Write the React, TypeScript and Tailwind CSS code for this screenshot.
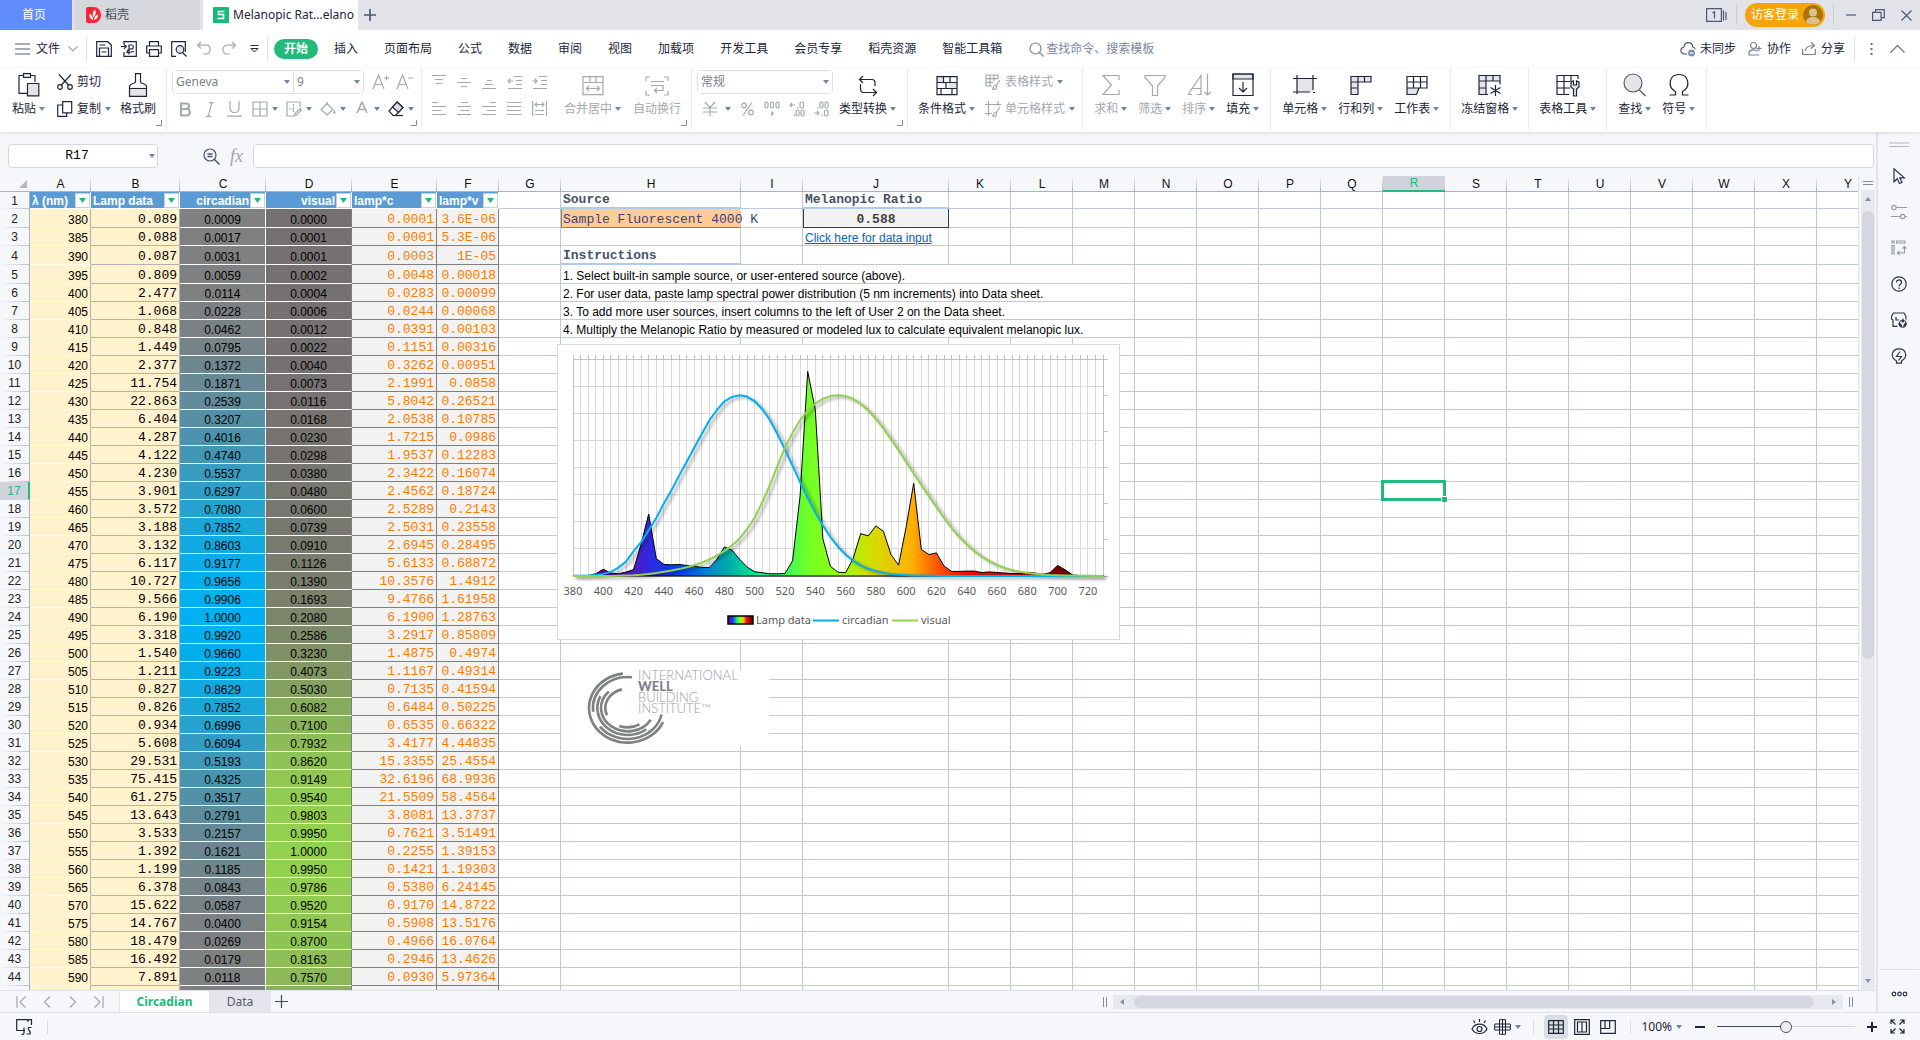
import type { ReactNode } from "react";

type Box = { w?: number; h?: number; className?: string; children: ReactNode };

function Ic({ w = 16, h = 16, className = "", children }: Box) {
  return (
    <svg
      width={w}
      height={h}
      viewBox={`0 0 ${w} ${h}`}
      fill="none"
      stroke="currentColor"
      strokeWidth={1.2}
      className={`shrink-0 ${className}`}
      aria-hidden="true"
    >
      {children}
    </svg>
  );
}

function Caret() {
  return (
    <svg width={6} height={4} viewBox="0 0 6 4" className="shrink-0 fill-[#7384a3]" aria-hidden="true">
      <path d="M0 0h6L3 4z" />
    </svg>
  );
}

function Launcher() {
  return (
    <svg width={6} height={6} viewBox="0 0 6 6" fill="none" stroke="#7f8ba6" className="absolute right-1 bottom-1" aria-hidden="true">
      <path d="M5.5 0v5.5H0" />
    </svg>
  );
}

function Big({ icon, label, caret = true, off = false }: { icon: ReactNode; label: string; caret?: boolean; off?: boolean }) {
  return (
    <button className={`mt-[5px] flex h-[45px] flex-col items-center justify-between whitespace-nowrap ${off ? "text-[#a6a8ac]" : "text-[#1d2536]"}`}>
      {icon}
      <span className="flex items-center gap-[3px] leading-[18px]">
        {label}
        {caret && <Caret />}
      </span>
    </button>
  );
}

function Group({ children, className = "px-[10px]", launcher = false }: { children: ReactNode; className?: string; launcher?: boolean }) {
  return (
    <div className={`relative flex h-[62px] shrink-0 items-start border-r border-[#ececef] ${className}`}>
      {children}
      {launcher && <Launcher />}
    </div>
  );
}

function Tool({ label, children, className = "w-[25px] justify-center" }: { label: string; children: ReactNode; className?: string }) {
  return (
    <button aria-label={label} className={`flex h-5 items-center text-[#a6a8ac] ${className}`}>
      {children}
    </button>
  );
}

/* ---------- title bar ---------- */

function TitleBar() {
  return (
    <header className="flex h-[30px] shrink-0 items-stretch bg-[#e1e3e8]">
      <button className="w-[72px] bg-[#608dfb] pr-1 text-white">首页</button>
      <button className="ml-[3px] flex w-[125px] items-center gap-1 bg-[#d6d8dd] pl-[11px] text-[#44484f]">
        <svg width={15} height={16} viewBox="0 0 15 16" aria-hidden="true">
          <path d="M2 0h6a7 8 0 0 1 0 16H2a2 2 0 0 1-2-2V2a2 2 0 0 1 2-2z" fill="#fb2438" />
          <path d="M7 13C4 12 3 9 3.500 6.500 6 8 7 10 7 13zm.5-2.500C6 7 7 4 9 2.500c1.500 3 .5 6-1.500 8zm.3 2.500C8.500 10 10 8 12 7.500c.3 3-1.500 5-4.200 5.500z" fill="#fff" />
        </svg>
        稻壳
      </button>
      <button className="ml-[3px] flex w-[155px] items-center gap-1 overflow-hidden bg-white pl-[10px] whitespace-nowrap text-[#1d2536]">
        <svg width={16} height={16} viewBox="0 0 16 16" className="shrink-0" aria-hidden="true">
          <rect width={16} height={16} rx={1} fill="#15bb78" />
          <path d="M11.500 4.500h-6v3h5v4h-6" fill="none" stroke="#fff" strokeWidth={1.600} />
        </svg>
        <span className="overflow-hidden">Melanopic Rat...elano</span>
      </button>
      <button aria-label="新建标签" className="flex w-6 items-center justify-center text-[#4a5878]">
        <Ic w={12} h={12}><path d="M6 0v12M0 6h12" strokeWidth={1.700} /></Ic>
      </button>
      <div className="ml-auto flex items-center text-[#4a5878]">
        <button aria-label="窗口列表" className="mr-[9px]">
          <Ic w={21} h={14}>
            <path d="M.6.6h14.800v12.800H.6zM17.500 2.500v10M20 4v8" />
            <path d="M6.500 5l2-1.200V10.500" />
          </Ic>
        </button>
        <span className="h-5 w-px bg-[#c9ccd3]" />
        <button className="ml-2 flex h-6 w-20 items-center gap-1 rounded-full bg-[#f5a50b] pl-[6px] whitespace-nowrap text-white">
          访客登录
          <svg width={20} height={20} viewBox="0 0 20 20" className="shrink-0" aria-hidden="true">
            <circle cx={10} cy={10} r={10} fill="#a8740a" />
            <circle cx={10} cy={7.500} r={4} fill="#dcc18c" />
            <path d="M3 17a7 5 0 0 1 14 0 10 10 0 0 1-14 0z" fill="#dcc18c" />
          </svg>
        </button>
        <span className="ml-2 h-5 w-px bg-[#c9ccd3]" />
        <button aria-label="最小化" className="ml-3"><Ic w={10}><path d="M0 8h10" /></Ic></button>
        <button aria-label="还原" className="ml-4">
          <Ic w={13} h={12}><path d="M3.500 3V.6h8.800v8h-3M.6 3.300h8.500v8H.6z" /></Ic>
        </button>
        <button aria-label="关闭" className="mr-2 ml-4"><Ic w={11} h={11}><path d="M.5.5l10 10M10.500.5l-10 10" /></Ic></button>
      </div>
    </header>
  );
}

/* ---------- menu row ---------- */

const menuTabs = ["插入", "页面布局", "公式", "数据", "审阅", "视图", "加载项", "开发工具", "会员专享", "稻壳资源", "智能工具箱"];

function MenuRow() {
  return (
    <nav className="flex h-[38px] shrink-0 items-center bg-white text-[#1d2536]">
      <button className="ml-[15px] flex items-center gap-[6px]">
        <Ic w={15} h={12}><path d="M0 1h15M0 6h15M0 11h15" stroke="#555c6b" /></Ic>
        文件
        <Ic w={10} h={6} className="ml-[2px] text-[#a5a8b0]"><path d="M.5.5L5 5 9.500.5" /></Ic>
      </button>
      <span className="ml-2 h-6 w-px bg-[#dedfe3]" />
      <div className="ml-[9px] flex items-center gap-[9px]">
        <button aria-label="保存"><Ic><path d="M.7.7h11L15.300 4v11.300H.7zM3.500 15V7h9v8M3.500 4h6M5.500 11h5" /></Ic></button>
        <button aria-label="输出为PDF"><Ic><path d="M3 3V.7h12.300v14.600H3V11M0 5.500h5M3 3.300l2.300 2.200L3 7.800M8 13.500V4h2.500c2.500 0 2.500 3.800 0 3.800C8 8 6 9.500 6 11.500c2 .5 5-1 7-1" /></Ic></button>
        <button aria-label="打印"><Ic><path d="M3.500 5V.7h9V5M3.500 12H.7V5h14.600v7h-2.800M3.500 8.700h9v6.600h-9z" /></Ic></button>
        <button aria-label="打印预览"><Ic><path d="M5 15.300H.7V.7h13.600V11" /><circle cx={9} cy={8.500} r={3.800} fill="#e4e5e8" /><path d="M11.500 11.500l4 4" /></Ic></button>
        <button aria-label="撤销" className="text-[#a9abb0]"><Ic><path d="M5 1L1.500 4.200 5 7.500M1.500 4.200H10c5.500 0 5.500 8.800 0 8.800H7" /></Ic></button>
        <button aria-label="恢复" className="text-[#a9abb0]"><Ic><path d="M11 1l3.500 3.200L11 7.500M14.500 4.200H6c-5.500 0-5.500 8.800 0 8.800h3" /></Ic></button>
        <button aria-label="自定义快速访问" className="ml-1"><Ic w={9} h={8}><path d="M.5.500h8M1 3.500L4.500 7 8 3.500z" strokeWidth={1} /></Ic></button>
      </div>
      <span className="ml-2 h-6 w-px bg-[#dedfe3]" />
      <button className="ml-[6px] h-5 w-11 rounded-full bg-[#21ba7b] font-bold text-white">开始</button>
      <div className="ml-[3px] flex">
        {menuTabs.map((t) => (
          <button key={t} className="px-[13px] whitespace-nowrap">{t}</button>
        ))}
      </div>
      <label className="ml-[14px] flex items-center gap-[2px] text-[#7e879c]">
        <Ic w={15} h={15}><circle cx={6.500} cy={6.500} r={5.500} /><path d="M10.500 10.500l4 4" /></Ic>
        <input className="w-[140px] outline-none placeholder:text-[#7e879c]" placeholder="查找命令、搜索模板" />
      </label>
      <div className="mr-[15px] ml-auto flex items-center whitespace-nowrap">
        <button className="flex items-center gap-1">
          <Ic w={16} className="text-[#555c6b]">
            <path d="M7 13H4.500C-.5 12.500 0 6.500 4 6c.5-6 8.500-5.500 8.700 0 1.200.3 2.300 1.300 2.500 2.500" />
            <circle cx={11.500} cy={12} r={3.500} fill="#7c8fb3" stroke="none" /><path d="M9.700 12h3.600" stroke="#fff" />
          </Ic>
          未同步
        </button>
        <button className="ml-3 flex items-center gap-[5px]">
          <Ic w={14} className="text-[#7a808c]"><circle cx={5.500} cy={4.500} r={3} /><path d="M10 10.500c-2-2.500-8.500-2-9 1v2.500h10M8.500 7.500h5M11 5v5" /></Ic>
          协作
        </button>
        <button className="ml-[11px] flex items-center gap-[5px]">
          <Ic w={14} className="text-[#7a808c]"><path d="M.7 8v5.500h12.600V8M3.500 10c0-4 2.500-5.500 8-5.500M9 1.500l3.500 3-3.500 3" /></Ic>
          分享
        </button>
        <span className="ml-[9px] h-6 w-px bg-[#dedfe3]" />
        <button aria-label="更多" className="ml-[15px] text-[#666d7b]"><Ic w={3} h={12}><path d="M1.500 0v2M1.500 5v2M1.500 10v2" strokeWidth={2} /></Ic></button>
        <button aria-label="折叠功能区" className="ml-[17px] text-[#666d7b]"><Ic w={15} h={8}><path d="M.5 7.500l7-7 7 7" /></Ic></button>
      </div>
    </nav>
  );
}

/* ---------- ribbon ---------- */

const alignTop = ["M0 1.500h14M3 5.500h8M4 9.500h6", "M4 4.500h6M0 8.500h14M4 12.500h6", "M5 6.500h5M3 10.500h8M0 14.500h14", "M7 2.500h8M9 6.500h6M9 10.500h6M1 14.500h14M1 7h5M3.500 4.500L1 7l2.500 2.500", "M7 2.500h8M9 6.500h6M9 10.500h6M1 14.500h14M0 7h5M2.500 4.500L5 7 2.500 9.500"];
const alignBottom = ["M0 1.500h6M0 5.500h14M0 9.500h9M0 13.500h14", "M4 1.500h7M0 5.500h14M3 9.500h9M0 13.500h14", "M8 1.500h6M0 5.500h14M5 9.500h9M0 13.500h14", "M0 1.500h14M0 5.500h14M0 9.500h14M0 13.500h14", "M.7 0v15M14.500 0v15M3 3.500h9M5 1.500l-2 2 2 2M10 1.500l2 2-2 2M3 9.500h9M3 13.500h9"];
const topNames = ["顶端对齐", "垂直居中", "底端对齐", "减少缩进量", "增加缩进量"];
const bottomNames = ["左对齐", "水平居中", "右对齐", "两端对齐", "分散对齐"];

function SmallRow({ icon, label, off = false, caret = true, className = "h-6" }: { icon: ReactNode; label: string; off?: boolean; caret?: boolean; className?: string }) {
  return (
    <button className={`flex items-center gap-1 whitespace-nowrap ${className} ${off ? "text-[#a6a8ac]" : "text-[#1d2536]"}`}>
      {icon}
      {label}
      {caret && <Caret />}
    </button>
  );
}

function SelectBox({ label, value, className }: { label: string; value: string; className: string }) {
  return (
    <label className={`flex h-full items-center bg-white pr-[3px] text-[#7d8086] ${className}`}>
      <select aria-label={label} defaultValue={value} className="w-full appearance-none bg-transparent pl-[3px] outline-none">
        <option>{value}</option>
      </select>
      <Caret />
    </label>
  );
}

function Ribbon() {
  return (
    <div className="z-10 flex h-16 shrink-0 overflow-hidden bg-white text-[#1d2536] shadow-[0_1px_3px_rgba(60,70,90,0.18)]">
      <Group className="pr-[10px] pl-3" launcher>
        <Big label="粘贴" icon={<Ic w={22} h={24}><path d="M9 20.400H1V2.500h4M13 2.500h4V9M5.500.7h7v3.600h-7z" /><path d="M9.500 10.500h11.300v12.300H9.500z" fill="#e4e5e8" /></Ic>} />
        <div className="mt-[2px] ml-3 flex flex-col gap-[5px]">
          <SmallRow caret={false} label="剪切" icon={<Ic><path d="M2 .5l10 11M14 .5l-10 11" /><circle cx={3} cy={13} r={2.300} /><circle cx={13} cy={13} r={2.300} /></Ic>} />
          <SmallRow className="h-5" label="复制" icon={<Ic><path d="M5.500 4H.7v11.300h9V12M5.700.7h9v11.200h-9z" /></Ic>} />
        </div>
        <div className="ml-[9px]">
          <Big caret={false} label="格式刷" icon={<Ic w={20} h={24}><path d="M1 14.500h18v9H1z" fill="#e4e5e8" stroke="none" /><path d="M7.500 9V.7h5V9c0 2 6 1 6 4.500v9.800h-17v-9.800C1.500 10 7.500 11 7.500 9zM1.500 15.500h17" /></Ic>} />
        </div>
      </Group>
      <Group className="pr-1 pl-[5px]" launcher>
        <div className="mt-[2px] flex flex-col gap-[5px]">
          <div className="flex items-center">
            <div className="flex h-6 w-[192px] rounded-sm border border-[#dcdee2]">
              <SelectBox label="字体" value="Geneva" className="w-[121px] border-r border-[#dcdee2]" />
              <SelectBox label="字号" value="9" className="flex-1" />
            </div>
            <Tool label="增大字号" className="ml-[5px] w-6 justify-center"><Ic w={18} h={16}><path d="M1 15L6.500 1 12 15M3 10.500h7M12 4h5M14.500 1.500v5" /></Ic></Tool>
            <Tool label="减小字号" className="w-6 justify-center"><Ic w={18} h={16}><path d="M1 15L6.500 1 12 15M3 10.500h7M12 4h5" /></Ic></Tool>
          </div>
          <div className="flex">
            <Tool label="加粗"><Ic w={12} h={15}><path d="M2 1.500h5c4 0 4 5.500 0 5.500H2zM2 7h5.500c4.500 0 4.500 6.500 0 6.500H2z" strokeWidth={2} /></Ic></Tool>
            <Tool label="倾斜"><Ic w={10} h={15}><path d="M4 .7h5M1 14.300h5M6.700.7l-3.400 13.600" /></Ic></Tool>
            <Tool label="下划线"><Ic w={15} h={16}><path d="M3 0v7c0 6 9 6 9 0V0M0 15.200h15" /></Ic></Tool>
            <Tool label="边框" className="w-[34px] gap-1 pl-[5px]"><Ic w={16}><path d="M1 1h14v14H1zM8 1v14M1 8h14" /></Ic><Caret /></Tool>
            <Tool label="绘制边框" className="w-[34px] gap-1 pl-[5px]"><Ic w={16}><path d="M7 15H1V1h13v5" /><path d="M7.500 3v8M3 8h6" strokeDasharray="2 1" /><path d="M14 7.500l1.500 1.500-5 5-2.500 1 1-2.500z" /></Ic><Caret /></Tool>
            <Tool label="填充颜色" className="w-[34px] gap-1 pl-[5px]"><Ic w={16}><path d="M7 1v3M7 2.500l6 6L7 14 1 8.500z" /><path d="M14.500 10c2 3-2 3 0 0z" fill="currentColor" /></Ic><Caret /></Tool>
            <Tool label="字体颜色" className="w-[34px] gap-1 pl-[5px]"><Ic w={16}><path d="M3 12L8 1l5 11M5 8.500h6" strokeWidth={1.600} /></Ic><Caret /></Tool>
            <Tool label="清除" className="w-[34px] gap-1 pl-[5px]"><Ic w={16} className="text-[#1d2536]"><path d="M9 1l6 5.500-7.500 8H5L1 10z" /><path d="M9 1l6 5.500-4.500 5L4.500 6z" fill="#d9dbdf" /><path d="M5 14.500h10" /></Ic><Caret /></Tool>
          </div>
        </div>
      </Group>
      <Group className="pr-[10px] pl-[5px]" launcher>
        <div className="mt-[2px] flex flex-col gap-[5px]">
          <div className="flex h-6 items-center">
            {alignTop.map((d, i) => <Tool key={d} label={topNames[i]}><Ic w={15}><path d={d} /></Ic></Tool>)}
          </div>
          <div className="flex">
            {alignBottom.map((d, i) => <Tool key={d} label={bottomNames[i]}><Ic w={15}><path d={d} /></Ic></Tool>)}
          </div>
        </div>
        <div className="ml-3 flex gap-3">
          <Big off label="合并居中" icon={<Ic w={22} h={24}><path d="M1 3.600h20v18H1zM1 9.500h20M8 3.600v6M14 3.600v6M4.500 15.500h13M7 13l-2.500 2.500L7 18M15 13l2.500 2.500L15 18" /></Ic>} />
          <Big off caret={false} label="自动换行" icon={<Ic w={24} h={24}><path d="M1 8V4h4M19 4h4v4M1 18v4h4M23 18v4h-4M6 8.500h13M6 12.500h12v5h-8M12 15l-2.500 2.500L12 20" /></Ic>} />
        </div>
      </Group>
      <Group className="pr-[11px] pl-[5px]" launcher>
        <div className="mt-[2px] mr-[6px] flex w-[136px] flex-col gap-[5px]">
          <div className="h-6 rounded-sm border border-[#dcdee2]"><SelectBox label="数字格式" value="常规" className="w-full" /></div>
          <div className="flex pl-[6px]">
            <Tool label="货币" className="w-8 gap-2"><Ic w={14}><path d="M2 1l5 5.500L12 1M7 6.500V15M0 7h14M0 11h14" /></Ic><Caret /></Tool>
            <Tool label="百分比" className="w-6 justify-center"><Ic w={13}><path d="M11 1.500L2 14.500" /><circle cx={3} cy={4.500} r={2.300} /><circle cx={10} cy={11.500} r={2.300} /></Ic></Tool>
            <Tool label="千位分隔"><Ic w={16}><rect x={1} y={1} width={3} height={6} rx={1.500} /><rect x={6.500} y={1} width={3} height={6} rx={1.500} /><rect x={12} y={1} width={3} height={6} rx={1.500} /><path d="M8.500 10.500v2l-1 2" strokeWidth={2} /></Ic></Tool>
            <Tool label="增加小数位"><Ic w={16}><path d="M1 4h5M3 2L1 4l2 2M8.500 6v1.500M5.500 13.500V15" /><rect x={11} y={1} width={3.500} height={6} rx={1.500} /><rect x={7} y={9} width={3} height={6} rx={1.500} /><rect x={12} y={9} width={3} height={6} rx={1.500} /></Ic></Tool>
            <Tool label="减少小数位" className="w-6 justify-center"><Ic w={16}><path d="M1 12h5M4 10l2 2-2 2M5 6v1.500M9 13.500V15" /><rect x={7} y={1} width={3} height={6} rx={1.500} /><rect x={12} y={1} width={3} height={6} rx={1.500} /><rect x={11.500} y={9} width={3.500} height={6} rx={1.500} /></Ic></Tool>
          </div>
        </div>
        <Big label="类型转换" icon={<Ic w={20} h={24}><path d="M5 3L1.500 6.500 5 10M1.500 6.500H14c2 0 3 1 3 3V13M2.500 11v5c0 2 1 3.500 3 3.500h12.500M15 16l3.500 3.500L15 23" /></Ic>} />
      </Group>
      <Group className="pr-[7px] pl-[10px]">
        <Big label="条件格式" icon={<Ic w={22} h={24}><path d="M1 4h6v5H1zM13 9h8v6h-8z" fill="#e4e5e8" stroke="none" /><path d="M1 3.600h20v18H1zM1 9.500h20M1 15.500h20M7.500 3.600v6M14 3.600v6M5 15.500v6M10 9.500v6M16 15.500v6" /></Ic>} />
        <div className="mt-[2px] ml-[10px] flex flex-col gap-[5px]">
          <SmallRow off label="表格样式" icon={<Ic><path d="M7 12H1V1h12v4M1 4.700h12M1 8.300h7M5 1v11M9 1v6M15 6l-4 6M11 11c-3 0-2 4-4 4 3 1 5 0 4.500-3" /></Ic>} />
          <SmallRow off className="h-5" label="单元格样式" icon={<Ic><path d="M3.500 0v15M0 3.500h16M13 0v5M0 12.500h7M15 6l-4 6M11 11c-3 0-2 4-4 4 3 1 5 0 4.500-3" /></Ic>} />
        </div>
      </Group>
      <Group className="gap-[11px] px-[11px]">
        <Big off label="求和" icon={<Ic w={20} h={24}><path d="M18 7V2.500H2L10.500 12 2 21.500h16V17" /></Ic>} />
        <Big off label="筛选" icon={<Ic w={22} h={24}><path d="M1 2.500h20v2L13.500 13v9.500h-5V13L1 4.500z" /></Ic>} />
        <Big off label="排序" icon={<Ic w={24} h={24}><path d="M1 21.500L14 2.500v19H10M14 2.500v19M5 15.500h9M20.500 1v21M17.500 19l3 3 3-3M1 21.500h4" /></Ic>} />
        <Big label="填充" icon={<Ic w={22} h={24}><path d="M1 1h20v5H1z" fill="#e4e5e8" /><path d="M1 1h20v21.500H1zM11 9v10M7 15l4 4 4-4" /></Ic>} />
      </Group>
      <Group className="gap-[11px] px-[11px]">
        <Big label="单元格" icon={<Ic w={24} h={24}><path d="M4 6h16v13H4z" fill="#e4e5e8" stroke="none" /><path d="M4 2v19M20 2v15M0 5.500h24M0 19h17M20 19.500h2" /></Ic>} />
        <Big label="行和列" icon={<Ic w={22} h={24}><path d="M1 3.500h20V9H8v12.500H1z" fill="#e4e5e8" stroke="none" /><path d="M1 3.500h20V9H1zM1 9v12.500h7V3.500M14.500 3.500V9M1 15h7" /></Ic>} />
        <Big label="工作表" icon={<Ic w={22} h={24}><path d="M1 15h12l-2 6.500H1z" fill="#e4e5e8" stroke="none" /><path d="M1 3.500h20V15H1zM1 9h20M7.500 3.500V15M14.500 3.500V15M1 15v6.500h9.500L13 15" /></Ic>} />
      </Group>
      <Group>
        <Big label="冻结窗格" icon={<Ic w={24} h={24}><path d="M1 2.500h21V8H8v13.500H1z" fill="#e4e5e8" stroke="none" /><path d="M10 21.500H1v-19h21v9M1 8h21M8 2.500v19M15 2.500V8M1 15h7M17.500 12v11M12.500 14.500l10 6M22.500 14.500l-10 6" /></Ic>} />
      </Group>
      <Group>
        <Big label="表格工具" icon={<Ic w={24} h={24}><path d="M13 21.500H1v-19h21V6M1 8.500h13M1 15h13M8 2.500v19M15 2.500v6" /><path d="M15 9v5l2.500 2v7h3v-7l2.500-2V9l-2.500-1v4h-3V8z" fill="#e4e5e8" /></Ic>} />
      </Group>
      <Group className="gap-[11px] px-[11px]">
        <Big label="查找" icon={<Ic w={24} h={24}><circle cx={10} cy={10} r={9} fill="#e4e5e8" stroke="#555c6b" /><path d="M16.500 17l6 6" stroke="#555c6b" /></Ic>} />
        <Big label="符号" icon={<Ic w={22} h={24}><path d="M1.500 22h6v-3.500C-1 14 1 1.500 11 1.500S23 14 14.500 18.500V22h6" /></Ic>} />
      </Group>
    </div>
  );
}

/* ---------- sheet data ---------- */

const lamp = [0.089, 0.088, 0.087, 0.809, 2.477, 1.068, 0.848, 1.449, 2.377, 11.754, 22.863, 6.404, 4.287, 4.122, 4.23, 3.901, 3.572, 3.188, 3.132, 6.117, 10.727, 9.566, 6.19, 3.318, 1.54, 1.211, 0.827, 0.826, 0.934, 5.608, 29.531, 75.415, 61.275, 13.643, 3.533, 1.392, 1.199, 6.378, 15.622, 14.767, 18.479, 16.492, 7.891, 4, 18, 34.2, 9.8, 7.9, 8.5, 3.7, 1.7, 1.7, 1.8, 1.8, 1.3, 1.5, 1.3, 1.1, 0.9, 1, 1.3, 1.1, 0.6, 1.2, 3.9, 2.3, 0.4, 0.1, 0.1, 0.1, 0.1];
const circadian = [0.0009, 0.0017, 0.0031, 0.0059, 0.0114, 0.0228, 0.0462, 0.0795, 0.1372, 0.1871, 0.2539, 0.3207, 0.4016, 0.474, 0.5537, 0.6297, 0.708, 0.7852, 0.8603, 0.9177, 0.9656, 0.9906, 1, 0.992, 0.966, 0.9223, 0.8629, 0.7852, 0.6996, 0.6094, 0.5193, 0.4325, 0.3517, 0.2791, 0.2157, 0.1621, 0.1185, 0.0843, 0.0587, 0.04, 0.0269, 0.0179, 0.0118, 0.0077, 0.005, 0.0033, 0.0022, 0.0015, 0.001, 0.0006, 0.0004, 0.0003, 0.0002, 0.0001, 0.0001, 0, 0, 0, 0, 0, 0, 0, 0, 0, 0, 0, 0, 0, 0, 0, 0];
const visual = [0, 0.0001, 0.0001, 0.0002, 0.0004, 0.0006, 0.0012, 0.0022, 0.004, 0.0073, 0.0116, 0.0168, 0.023, 0.0298, 0.038, 0.048, 0.06, 0.0739, 0.091, 0.1126, 0.139, 0.1693, 0.208, 0.2586, 0.323, 0.4073, 0.503, 0.6082, 0.71, 0.7932, 0.862, 0.9149, 0.954, 0.9803, 0.995, 1, 0.995, 0.9786, 0.952, 0.9154, 0.87, 0.8163, 0.757, 0.6949, 0.631, 0.5668, 0.503, 0.4412, 0.381, 0.321, 0.265, 0.217, 0.175, 0.1382, 0.107, 0.0816, 0.061, 0.0446, 0.032, 0.0232, 0.017, 0.0119, 0.0082, 0.0057, 0.0041, 0.0029, 0.0021, 0.0015, 0.001, 0.0007, 0.0005];
const lampC = "0.0001 0.0001 0.0003 0.0048 0.0283 0.0244 0.0391 0.1151 0.3262 2.1991 5.8042 2.0538 1.7215 1.9537 2.3422 2.4562 2.5289 2.5031 2.6945 5.6133 10.3576 9.4766 6.1900 3.2917 1.4875 1.1167 0.7135 0.6484 0.6535 3.4177 15.3355 32.6196 21.5509 3.8081 0.7621 0.2255 0.1421 0.5380 0.9170 0.5908 0.4966 0.2946 0.0930".split(" ");
const lampV = "3.6E-06 5.3E-06 1E-05 0.00018 0.00099 0.00068 0.00103 0.00316 0.00951 0.0858 0.26521 0.10785 0.0986 0.12283 0.16074 0.18724 0.2143 0.23558 0.28495 0.68872 1.4912 1.61958 1.28763 0.85809 0.4974 0.49314 0.41594 0.50225 0.66322 4.44835 25.4554 68.9936 58.4564 13.3737 3.51491 1.39153 1.19303 6.24145 14.8722 13.5176 16.0764 13.4626 5.97364".split(" ");

const mix = (a: number[], b: number[], t: number) => `rgb(${a.map((v, i) => Math.round(v + (b[i] - v) * t)).join(",")})`;
const blueScale = (t: number) => mix([128, 128, 128], [0, 176, 240], t);
const greenScale = (t: number) => mix([118, 113, 113], [146, 208, 80], t);

const columns: [string, number][] = [
  ["A", 61], ["B", 89], ["C", 86], ["D", 86], ["E", 85], ["F", 62], ["G", 62], ["H", 180], ["I", 62], ["J", 146],
  ..."KLMNOPQRSTUVWXY".split("").map((c): [string, number] => [c, 62]),
];

const instructions = [
  "1. Select built-in sample source, or user-entered source (above).",
  "2. For user data, paste lamp spectral power distribution (5 nm increments) into Data sheet.",
  "3. To add more user sources, insert columns to the left of User 2 on the Data sheet.",
  "4. Multiply the Melanopic Ratio by measured or modeled lux to calculate equivalent melanopic lux.",
];

const MONO = "font-['Liberation_Mono',monospace] text-[13px]";

function FilterHead({ label, right = false }: { label: string; right?: boolean }) {
  return (
    <td className="border-r border-b border-white bg-[#5b9bd5] font-bold text-white">
      <div className="flex h-[15px] items-center pl-[2px]">
        <span className={`flex-1 overflow-hidden ${right ? "pr-px text-right" : ""}`}>{label}</span>
        <button aria-label={`筛选 ${label}`} className="flex h-[15px] w-[15px] shrink-0 items-center justify-center border border-[#c9cfda] bg-white">
          <svg width={7} height={5} viewBox="0 0 7 5" aria-hidden="true"><path d="M0 0h7L3.500 5z" fill="#1fb87a" /></svg>
        </button>
      </div>
    </td>
  );
}

function DataCells({ row }: { row: number }) {
  const i = row - 2;
  const shown = row <= 44;
  return (
    <>
      <td className="border-r border-b border-r-[#b2b2b2] border-b-[#fffaf0] bg-[#fff2cc] pr-[2px] text-right text-black">{shown && 380 + i * 5}</td>
      <td className={`border-r border-b border-[#b2b2b2] bg-[#fff2cc] pr-[2px] text-right text-black ${MONO}`}>{shown && lamp[i].toFixed(3)}</td>
      <td className="border-r border-b border-white text-center text-black" style={{ backgroundColor: blueScale(circadian[i]) }}>{shown && circadian[i].toFixed(4)}</td>
      <td className="border-r border-b border-r-[#7f7f7f] border-b-white text-center text-black" style={{ backgroundColor: greenScale(visual[i]) }}>{shown && visual[i].toFixed(4)}</td>
      <td className={`border-r border-b border-[#7f7f7f] bg-[#f2f2f2] pr-[2px] text-right text-[#fa7d00] ${MONO}`}>{lampC[i]}</td>
      <td className={`border-r border-b border-[#7f7f7f] bg-[#f2f2f2] pr-[2px] text-right text-[#fa7d00] ${MONO}`}>{lampV[i]}</td>
    </>
  );
}

const PLAIN = "border-r border-b border-[#c3c9dc]";
const TITLE = `border-r border-b-2 border-r-[#c3c9dc] border-b-[#acccea] pl-[2px] leading-3 font-bold text-[#44546a] ${MONO}`;

function otherCell(row: number, col: string) {
  if (row === 1 && col === "H") return <td key={col} className={TITLE}>Source</td>;
  if (row === 1 && col === "J") return <td key={col} className={TITLE}>Melanopic Ratio</td>;
  if (row === 4 && col === "H") return <td key={col} className={TITLE}>Instructions</td>;
  if (row === 2 && col === "H")
    return <td key={col} className={`border-b border-l border-[#7f7f7f] bg-[#ffcc99] pl-px text-[#3f3f76] ${MONO}`}>Sample Fluorescent 4000 K</td>;
  if (row === 2 && col === "J")
    return <td key={col} className={`border-x border-b border-[#3f3f3f] bg-[#f2f2f2] text-center font-bold text-[#3f3f3f] ${MONO}`}>0.588</td>;
  if (row === 3 && col === "J")
    return <td key={col} className={`${PLAIN} pl-[2px]`}><a href="#data" className="text-[#0563c1] underline">Click here for data input</a></td>;
  if (row >= 5 && row <= 8) {
    if (col === "H") return <td key={col} colSpan={6} className={`${PLAIN} pl-[2px] text-black`}>{instructions[row - 5]}</td>;
    if ("IJKLM".includes(col)) return null;
  }
  if (row === 17 && col === "R")
    return (
      <td key={col} className={`${PLAIN} relative`}>
        <span className="absolute -top-[2px] -right-[2px] -bottom-[2px] -left-[2px] border-[3px] border-[#21ba7b]" />
        <span className="absolute -right-[3px] -bottom-[3px] h-[6px] w-[6px] border-t border-l border-white bg-[#21ba7b]" />
      </td>
    );
  return <td key={col} className={PLAIN} />;
}

function Grid() {
  const rows = Array.from({ length: 45 }, (_, i) => i + 1);
  return (
    <table className="w-[1879px] table-fixed border-separate border-spacing-0 bg-white font-['Liberation_Sans',sans-serif] text-xs leading-[14px] whitespace-nowrap [&_td]:align-bottom [&_td]:leading-[14px]">
      <colgroup>
        <col className="w-[30px]" />
        {columns.map(([c, w]) => <col key={c} style={{ width: w }} />)}
      </colgroup>
      <thead>
        <tr className="h-4 bg-[#f5f7fa] text-[#111]">
          <th className="border-b border-[#a5b0ca]">
            <svg width={8} height={8} viewBox="0 0 8 8" className="mr-[3px] ml-auto" aria-hidden="true"><path d="M8 0v8H0z" fill="#b5b8bf" /></svg>
          </th>
          {columns.map(([c]) => (
            <th
              key={c}
              className={
                c === "R"
                  ? "border-b-2 border-[#21ba7b] bg-[#d0d3db] p-0 font-normal text-[#21ba7b]"
                  : "border-b border-[#a5b0ca] bg-[linear-gradient(to_top,#a5b0ca,#f5f7fa)] bg-[length:1px_100%] bg-right bg-no-repeat p-0 font-normal"
              }
            >
              {c}
            </th>
          ))}
        </tr>
      </thead>
      <tbody>
        {rows.map((row) => (
          <tr key={row} className={row === 1 ? "h-[17px]" : row === 2 || row === 4 || row === 5 ? "h-[19px]" : "h-[18px]"}>
            <th
              className={
                row === 17
                  ? "border-r-2 border-b border-r-[#21ba7b] border-b-[#d0d3db] bg-[#d0d3db] p-0 font-normal text-[#21ba7b]"
                  : "border-r border-r-[#a5b0ca] bg-[#f5f7fa] bg-[linear-gradient(to_left,#b5bed3,#f5f7fa)] bg-[length:100%_1px] bg-bottom bg-no-repeat p-0 font-normal text-[#222]"
              }
            >
              {row < 45 && row}
            </th>
            {row === 1 ? (
              <>
                <FilterHead label="λ (nm)" />
                <FilterHead label="Lamp data" />
                <FilterHead label="circadian" right />
                <FilterHead label="visual" right />
                <FilterHead label="lamp*c" />
                <FilterHead label="lamp*v" />
              </>
            ) : (
              <DataCells row={row} />
            )}
            {columns.slice(6).map(([c]) => otherCell(row, c))}
          </tr>
        ))}
      </tbody>
    </table>
  );
}

/* ---------- chart ---------- */

const L = 16;
const R = 546;
const T = 15;
const B = 232;
const px = (i: number) => L + (i * (R - L)) / 70;
const curve = (vals: number[], max: number) => vals.map((v, i) => `${px(i).toFixed(1)},${(B - (v / max) * (B - T)).toFixed(1)}`).join(" ");
const spectrum: [number, string][] = [
  [0, "#2a0040"], [6, "#6a00a0"], [12, "#4c1cc8"], [15, "#2b2be6"], [20, "#0040ff"], [25, "#0080d0"], [29, "#00a8a8"], [35, "#00f090"],
  [40, "#30ff60"], [44, "#70ff28"], [50, "#90ff10"], [56, "#d0e000"], [60, "#e8c800"], [64, "#ffb000"], [69, "#ff5000"], [74, "#f01000"], [85, "#c00000"], [91, "#800000"], [100, "#300000"],
];

function Spectrum({ id }: { id: string }) {
  return (
    <linearGradient id={id} x1={0} x2={1} y1={0} y2={0}>
      {spectrum.map(([o, c]) => <stop key={o} offset={`${o}%`} stopColor={c} />)}
    </linearGradient>
  );
}

function Chart() {
  const v = curve(visual, 1.2);
  const c = curve(circadian, 1.2);
  return (
    <svg width={563} height={296} viewBox="0 0 563 296" className="absolute top-[168px] left-[557px] font-['Noto_Sans',sans-serif] text-[11px]" role="img" aria-label="Lamp spectrum">
      <defs>
        <Spectrum id="spectrum" />
        <Spectrum id="spectrumKey" />
        <filter id="soft" x="-10%" y="-10%" width="120%" height="120%"><feGaussianBlur stdDeviation={1.500} /></filter>
      </defs>
      <rect x={0.500} y={0.500} width={562} height={295} fill="#fff" stroke="#d9d9d9" />
      <g stroke="#d9d9d9" shapeRendering="crispEdges">
        {Array.from({ length: 71 }, (_, i) => <line key={i} x1={px(i)} x2={px(i)} y1={T} y2={B} />)}
        {Array.from({ length: 9 }, (_, i) => <line key={i} x1={L} x2={R} y1={B - (i * (B - T)) / 8} y2={B - (i * (B - T)) / 8} />)}
      </g>
      <g stroke="#bfbfbf" shapeRendering="crispEdges">
        {Array.from({ length: 71 }, (_, i) => <line key={i} x1={px(i)} x2={px(i)} y1={T - 4} y2={T} />)}
        {Array.from({ length: 7 }, (_, i) => <line key={i} x1={R} x2={R + 5} y1={B - (i * (B - T)) / 6} y2={B - (i * (B - T)) / 6} />)}
        <path d={`M${L} ${T}H${R}V${B}H${L}z`} fill="none" />
      </g>
      <polygon points={`${L},${B} ${curve(lamp, 80)} ${R},${B}`} fill="url(#spectrum)" stroke="#000" strokeWidth={1} />
      <g fill="none" stroke="#000" strokeOpacity={0.25} strokeWidth={3} filter="url(#soft)">
        <polyline points={c} transform="translate(3 2)" />
        <polyline points={v} transform="translate(3 2)" />
      </g>
      <polyline points={c} fill="none" stroke="#00b0f0" strokeWidth={2} strokeLinejoin="round" />
      <polyline points={v} fill="none" stroke="#92d050" strokeWidth={2} strokeLinejoin="round" />
      <g fill="#595959" textAnchor="middle">
        {Array.from({ length: 18 }, (_, i) => <text key={i} x={px(i * 4)} y={251}>{380 + i * 20}</text>)}
      </g>
      <rect x={171} y={272} width={25} height={8} fill="url(#spectrumKey)" stroke="#000" strokeWidth={1.500} />
      <path d="M256 276.500h26" stroke="#00b0f0" strokeWidth={2} />
      <path d="M335 276.500h26" stroke="#92d050" strokeWidth={2} />
      <g fill="#595959">
        <text x={199} y={280}>Lamp data</text>
        <text x={285} y={280}>circadian</text>
        <text x={364} y={280}>visual</text>
      </g>
    </svg>
  );
}

const arc = (rx: number, ry: number, from: number, to: number) => {
  const pt = (deg: number) => {
    const a = (deg * Math.PI) / 180;
    return `${(200 + rx * Math.cos(a)).toFixed(1)} ${(114 + ry * Math.sin(a)).toFixed(1)}`;
  };
  return `M${pt(from)}A${rx} ${ry} 0 ${to - from > 180 ? 1 : 0} 1 ${pt(to)}`;
};

function WellLogo() {
  return (
    <div className="absolute top-[494px] left-[561px] flex h-[76px] w-[208px] bg-white">
      <svg width={108} height={76} viewBox="0 0 324 228" fill="none" stroke="#808184" strokeWidth={8} className="shrink-0" aria-hidden="true">
        <path d={arc(116, 104, 24, 263)} />
        <path d={arc(104, 93, 12, 143)} />
        <path d={arc(104, 93, 173, 277)} />
        <path d={arc(91, 81, 52, 206)} />
        <path d={arc(80, 70, 30, 225)} />
        <path d={arc(67, 58, 158, 255)} />
        <path d={arc(67, 58, 58, 112)} />
      </svg>
      <div className="-ml-[31px] flex flex-col font-['Lato',sans-serif] text-[13px] leading-[11px] font-light text-[#9c9c9f]">
        <span>INTERNATIONAL</span>
        <b className="font-black text-[#808184]">WELL</b>
        <span>BUILDING</span>
        <span>INSTITUTE™</span>
      </div>
    </div>
  );
}

/* ---------- frame ---------- */

function FormulaBar() {
  return (
    <div className="flex h-11 shrink-0 items-start pt-3 pr-[2px] pl-2">
      <label className="flex h-6 w-[150px] items-center rounded-sm border border-[#d5d8de] bg-white pr-[2px]">
        <input aria-label="名称框" defaultValue="R17" className={`w-full pr-1 text-center text-black outline-none ${MONO}`} />
        <Caret />
      </label>
      <button aria-label="浏览公式结果" className="mt-1 ml-[45px] text-[#4a5468]">
        <Ic w={17} h={17}><circle cx={7} cy={7} r={6} /><path d="M11.500 11.500l5 5M4.500 6h5M4.500 8.500h5" strokeWidth={1.500} /></Ic>
      </button>
      <button aria-label="插入函数" className="ml-[10px] w-4 text-left font-['Liberation_Serif',serif] text-lg leading-6 text-[#a0a3aa] italic">fx</button>
      <input aria-label="编辑栏" className="ml-[7px] h-6 min-w-0 flex-1 rounded-sm border border-[#d5d8de] bg-white px-2 outline-none" />
    </div>
  );
}

function VerticalScroll() {
  return (
    <div className="flex w-[18px] shrink-0 flex-col border-l border-[#e1e3ea] pr-px pl-[2px]">
      <div className="flex h-[14px] items-center justify-center text-[#7f8ba6]"><Ic w={10} h={4}><path d="M0 .5h10M0 3.500h10" strokeWidth={1} /></Ic></div>
      <div className="flex flex-1 flex-col items-center bg-[#e8e9ef] py-[7px]">
        <svg width={6} height={4} viewBox="0 0 6 4" fill="#8291b3" aria-hidden="true"><path d="M0 4h6L3 0z" /></svg>
        <div className="mt-[10px] h-[57%] w-3 rounded-full bg-[#d4d7df]" />
        <svg width={6} height={4} viewBox="0 0 6 4" fill="#8291b3" className="mt-auto" aria-hidden="true"><path d="M0 0h6L3 4z" /></svg>
      </div>
    </div>
  );
}

function SheetTabs() {
  const nav: [string, string][] = [
    ["首个", "M1 0v12M9.500.5L4 6l5.500 5.500"],
    ["上一个", "M8 .5L2.500 6 8 11.500"],
    ["下一个", "M2 .5L7.500 6 2 11.500"],
    ["末个", "M.5.5L6 6 .5 11.500M9 0v12"],
  ];
  return (
    <div className="flex h-[22px] shrink-0 items-stretch border-t border-[#dfe2e8]">
      <div className="flex w-[120px] items-center border-r border-[#e4e6ec] text-[#a3a6ad]">
        {nav.map(([n, d]) => <button key={n} aria-label={n} className="ml-4"><Ic w={10} h={12}><path d={d} /></Ic></button>)}
      </div>
      <button className="w-[89px] bg-white text-center font-bold text-[#21ba7b]">Circadian</button>
      <button className="w-[62px] bg-[#e5e6ed] text-center text-[#555c6b]">Data</button>
      <button aria-label="新建工作表" className="ml-1 text-[#3d4558]"><Ic w={13} h={13}><path d="M6.500 0v13M0 6.500h13" /></Ic></button>
      <div className="mr-[23px] ml-auto flex w-[40%] items-center gap-[6px] text-[#7f8ba6]">
        <Ic w={4} h={10}><path d="M.5 0v10M3.500 0v10" strokeWidth={1} /></Ic>
        <div className="flex h-[14px] flex-1 items-center gap-[10px] bg-[#e8e9ef] px-[7px]">
          <svg width={4} height={6} viewBox="0 0 4 6" fill="#8291b3" aria-hidden="true"><path d="M4 0v6L0 3z" /></svg>
          <div className="mr-2 h-3 flex-1 rounded-full bg-[#d4d7df]" />
          <svg width={4} height={6} viewBox="0 0 4 6" fill="#8291b3" aria-hidden="true"><path d="M0 0v6l4-3z" /></svg>
        </div>
        <Ic w={4} h={10}><path d="M.5 0v10M3.500 0v10" strokeWidth={1} /></Ic>
      </div>
    </div>
  );
}

function SidePane() {
  return (
    <aside className="flex w-11 shrink-0 flex-col items-center border-l-2 border-[#e4e5ec] text-[#2c3445]">
      <Ic w={20} h={5} className="mt-[10px] text-[#b4b7be]"><path d="M0 1h20M0 4.500h20" strokeWidth={1} /></Ic>
      <div className="mt-[21px] flex flex-col gap-5">
        <button aria-label="选择"><Ic><path d="M3 .8v13l3.200-3 2.300 4.700 2.500-1.200-2.300-4.500h4.600z" /></Ic></button>
        <button aria-label="属性" className="text-[#959aa5]"><Ic><circle cx={3} cy={3.500} r={2.200} /><path d="M5.200 3.500H16M0 12.500h9.500M14 12.500h2" /><circle cx={11.700} cy={12.500} r={2.200} /></Ic></button>
        <button aria-label="智能" className="text-[#959aa5]"><Ic><path d="M1 1h2v2H1zM5.500 1H14v2H5.500zM1 5.500h2V14H1zM13.500 6.500v6.500H6.500M11.500 8.500l2-2 2 2M8.500 11l-2 2 2 2" /></Ic></button>
        <button aria-label="帮助"><Ic><circle cx={8} cy={8} r={7.200} /><path d="M5.500 6.500c0-3.500 5-3.500 5 0C10.500 8.300 8 8.300 8 10.200M8 11.500V13" /></Ic></button>
        <button aria-label="稻壳">
          <Ic>
            <path d="M6.500 14.300H2V8C0 7.500.3 5.500.7 4L2.500 1h10.500l1.800 3c.4 1.500.3 2.500 0 3.500M5 5v3h3" />
            <path d="M11.300 15c-3.300-.3-4-2.500-3.500-4.500 2 .5 3.300 2 3.500 4.500zM11 10.500c-.5-1.500 0-3 1.200-4 1 1.300 1 3 0 4.300M12.300 15c0-2.500 1-4 3-4.700.6 2.400-.5 4.400-3 4.700z" fill="currentColor" stroke="none" />
            <circle cx={11.700} cy={11.800} r={3.600} strokeWidth={1} />
          </Ic>
        </button>
        <button aria-label="推荐"><Ic><path d="M5.500 13C-1.500 9 1 .8 8 .8S17.500 9 10.500 13v2.200h-5zM9 3.500L5.500 8.500h5L7.500 12.500" /></Ic></button>
      </div>
      <button aria-label="更多" className="mt-auto flex h-[43px] w-10 items-center justify-center border-t border-[#dfe2e8] pt-[6px]">
        <Ic w={17} h={6}><circle cx={3} cy={3} r={1.800} /><circle cx={8.500} cy={3} r={1.800} /><circle cx={14} cy={3} r={1.800} /></Ic>
      </button>
    </aside>
  );
}

function StatusBar() {
  return (
    <footer className="flex h-7 shrink-0 items-center border-t border-[#dfe2e8] text-[#1d2536]">
      <button aria-label="宏" className="ml-4">
        <Ic w={17}><path d="M6 11.500H.7V.7h11M9 11.500h-3M12 3V.7h3.500V6M8 8.500V14c0 1.500-2 1.500-2.500 1.500M15.500 8.500h-3c-1.500 3 3 3 1.500 6.500h-3.500" /></Ic>
      </button>
      <span className="ml-[14px] h-[14px] w-px bg-[#dcdee4]" />
      <div className="mr-[15px] ml-auto flex items-center">
        <button aria-label="护眼模式"><Ic w={17}><path d="M1 10c3-6.500 12-6.500 15 0-3 6-12 6-15 0zM8.500 0v3M2.500 1.500l1.500 2.500M14.500 1.500L13 4" /><circle cx={8.500} cy={10} r={2.500} /></Ic></button>
        <button aria-label="阅读模式" className="ml-[6px] flex items-center gap-1"><Ic w={17}><path d="M5.500.7h6v14.600h-6zM.7 5h15.600v6H.7zM8.500.7v14.600M.7 8h15.600" strokeWidth={1} /></Ic><Caret /></button>
        <span className="ml-3 h-[14px] w-px bg-[#dcdee4]" />
        <button aria-label="普通视图" className="ml-[10px] flex h-6 w-6 items-center justify-center rounded-sm bg-[#d7dde3]"><Ic w={16} h={14}><path d="M.7.7h14.600v12.600H.7zM.7 5h14.600M.7 9h14.600M5.500.7v12.600M10.500.7v12.600" /></Ic></button>
        <button aria-label="分页预览" className="ml-[6px]"><Ic w={16} h={16}><path d="M.7.7h14.600v14.600H.7zM3.500 3h9v10h-9zM8 3v10" /></Ic></button>
        <button aria-label="页面布局视图" className="ml-[10px]"><Ic w={16} h={14}><path d="M.7.7h14.600v12.600H.7zM.7 8.500h9M5 .7v7.800M9.700.7v7.800" /></Ic></button>
        <span className="ml-[14px] h-[14px] w-px bg-[#dcdee4]" />
        <button className="ml-[10px] flex items-center gap-1">100%<Caret /></button>
        <button aria-label="缩小" className="ml-[13px]"><Ic w={10} h={10}><path d="M0 5h10" strokeWidth={2} /></Ic></button>
        <input
          type="range"
          aria-label="显示比例"
          defaultValue={50}
          className="mx-3 h-px w-[138px] appearance-none bg-[linear-gradient(to_right,#3d4558_50%,#cfd2da_50%)] [&::-webkit-slider-thumb]:h-3 [&::-webkit-slider-thumb]:w-3 [&::-webkit-slider-thumb]:appearance-none [&::-webkit-slider-thumb]:rounded-full [&::-webkit-slider-thumb]:border [&::-webkit-slider-thumb]:border-[#4a5060] [&::-webkit-slider-thumb]:bg-[#f0f0f0]"
        />
        <button aria-label="放大"><Ic w={10} h={10}><path d="M5 0v10M0 5h10" strokeWidth={2} /></Ic></button>
        <button aria-label="全屏" className="ml-[13px]"><Ic w={15} h={15}><path d="M1 5V1h4M10 1h4v4M14 10v4h-4M5 14H1v-4M1 1l4.500 4.500M14 1L9.500 5.500M14 14L9.500 9.500M1 14l4.500-4.500" /></Ic></button>
      </div>
    </footer>
  );
}

export default function App() {
  return (
    <div className="flex h-screen flex-col overflow-hidden bg-[#f5f7fa] font-['Noto_Sans','Noto_Sans_CJK_SC',sans-serif] text-xs">
      <TitleBar />
      <MenuRow />
      <Ribbon />
      <div className="flex min-h-0 flex-1">
        <main className="flex min-w-0 flex-1 flex-col">
          <FormulaBar />
          <div className="flex min-h-0 flex-1">
            <div className="relative min-w-0 flex-1 overflow-hidden">
              <Grid />
              <Chart />
              <WellLogo />
            </div>
            <VerticalScroll />
          </div>
          <SheetTabs />
        </main>
        <SidePane />
      </div>
      <StatusBar />
    </div>
  );
}
